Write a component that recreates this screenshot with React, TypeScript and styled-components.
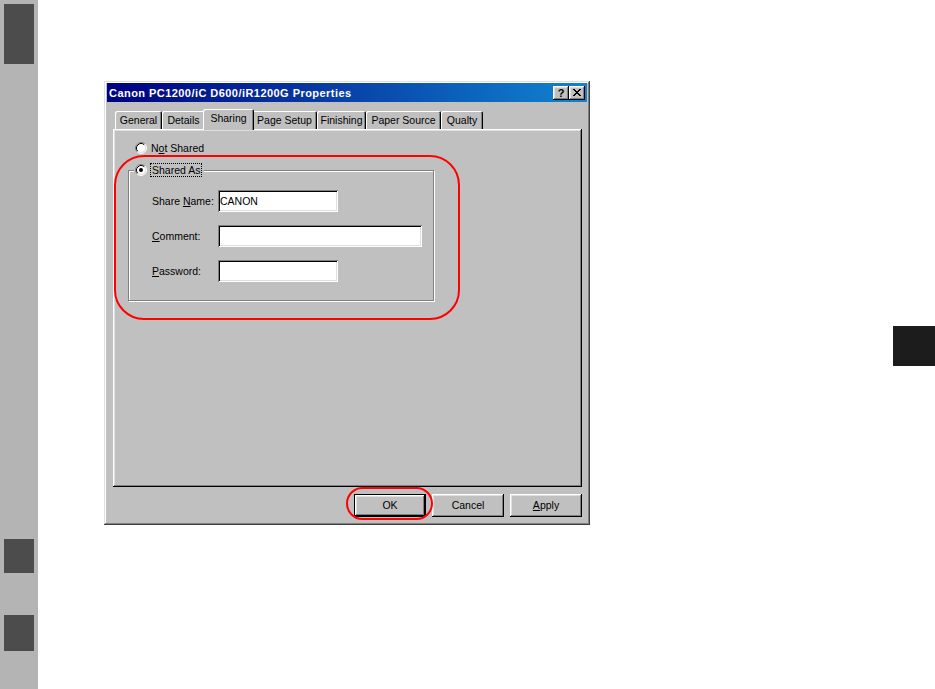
import * as React from 'react';
import styled, {createGlobalStyle} from 'styled-components';

const GlobalStyle = createGlobalStyle`
  html, body {
    margin: 0;
    padding: 0;
    background: #fff;
  }
  body {
    font-family: "Liberation Sans", Arial, sans-serif;
    font-size: 10.5px;
    color: #000;
  }
`;

interface ITab {
  label: string;
  width: number;
  selected?: boolean;
}

const tabs: ITab[] = [
  {label: 'General', width: 47},
  {label: 'Details', width: 43},
  {label: 'Sharing', width: 47, selected: true},
  {label: 'Page Setup', width: 65},
  {label: 'Finishing', width: 49},
  {label: 'Paper Source', width: 75},
  {label: 'Qualty', width: 42},
];

const Radio: React.VFC<{checked?: boolean}> = ({checked}) => (
  <RadioIcon width="12" height="12" viewBox="0 0 12 12">
    <circle cx="6" cy="6" r="5" fill="#fff" />
    <path d="M2.11 9.89 A5.5 5.5 0 0 1 9.89 2.11" fill="none" stroke="#808080" />
    <path d="M9.89 2.11 A5.5 5.5 0 0 1 2.11 9.89" fill="none" stroke="#fff" />
    <path d="M2.82 9.18 A4.5 4.5 0 0 1 9.18 2.82" fill="none" stroke="#000" />
    <path d="M9.18 2.82 A4.5 4.5 0 0 1 2.82 9.18" fill="none" stroke="#dfdfdf" />
    {checked && <circle cx="6" cy="6" r="2" fill="#000" />}
  </RadioIcon>
);

const CloseGlyph = () => (
  <svg width="8" height="7" viewBox="0 0 8 7">
    <path d="M0 0h2v1h1v1h2V1h1V0h2v1H7v1H6v1H5v1h1v1h1v1h1v1H6V6H5V5H3v1H2v1H0V6h1V5h1V4h1V3H2V2H1V1H0z" fill="#000" />
  </svg>
);

export default function App() {
  return (
    <>
      <GlobalStyle />
      <Page>
        <SideStrip>
          <SideBlock $top={0} $height={60} />
          <SideBlock $top={475} $height={34} />
          <SideBlock $top={42} $height={36} />
        </SideStrip>

        <Content>
          <Dialog>
            <TitleBar>
              <TitleText>Canon PC1200/iC D600/iR1200G Properties</TitleText>
              <TitleButtons>
                <TitleButton>?</TitleButton>
                <TitleButton>
                  <CloseGlyph />
                </TitleButton>
              </TitleButtons>
            </TitleBar>

            <Body>
              <TabRow>
                {tabs.map((t) => (
                  <Tab key={t.label} $width={t.width} $selected={!!t.selected}>
                    {t.label}
                  </Tab>
                ))}
              </TabRow>

              <Panel>
                <RadioRow>
                  <Radio />
                  <span>
                    N<u>o</u>t Shared
                  </span>
                </RadioRow>

                <Group>
                  <Legend>
                    <Radio checked />
                    <Focus>Shared As</Focus>
                  </Legend>
                  <Fields>
                    <FieldLabel>
                      Share <u>N</u>ame:
                    </FieldLabel>
                    <TextBox $width={120} defaultValue="CANON" />
                    <FieldLabel>
                      <u>C</u>omment:
                    </FieldLabel>
                    <TextBox $width={204} defaultValue="" />
                    <FieldLabel>
                      <u>P</u>assword:
                    </FieldLabel>
                    <TextBox $width={120} defaultValue="" />
                  </Fields>
                </Group>
              </Panel>

              <ButtonRow>
                <Button $default>OK</Button>
                <Button>Cancel</Button>
                <Button>
                  <u>A</u>pply
                </Button>
              </ButtonRow>
            </Body>

            <Callout $left={10} $top={74} $width={346} $height={165} $radius={30} />
            <Callout $left={242} $top={406} $width={87} $height={33} $radius={17} />
          </Dialog>
        </Content>

        <RightColumn>
          <RightTab />
        </RightColumn>
      </Page>
    </>
  );
}

const Page = styled.div`
  display: flex;
  width: 935px;
  height: 689px;
  overflow: hidden;
  background: #fff;
`;

const SideStrip = styled.div`
  width: 38px;
  flex: none;
  box-sizing: border-box;
  padding: 4px;
  display: flex;
  flex-direction: column;
  background: #b4b4b4;
`;

const SideBlock = styled.div<{$top: number; $height: number}>`
  margin-top: ${(p) => p.$top}px;
  height: ${(p) => p.$height}px;
  background: #4c4c4c;
`;

const Content = styled.div`
  flex: 1;
  padding: 81px 0 0 66px;
`;

const RightColumn = styled.div`
  width: 42px;
  flex: none;
  padding-top: 326px;
`;

const RightTab = styled.div`
  height: 40px;
  background: #1c1c1c;
`;

const Dialog = styled.div`
  position: relative;
  width: 486px;
  height: 444px;
  box-sizing: border-box;
  padding: 2px 3px;
  background: #c0c0c0;
  box-shadow: inset -1px -1px #404040, inset 1px 1px #dfdfdf,
    inset -2px -2px #808080, inset 2px 2px #fff;
`;

const TitleBar = styled.div`
  height: 19px;
  display: flex;
  align-items: center;
  justify-content: space-between;
  padding: 0 2px 0 2px;
  background: linear-gradient(to right, #000080, #1084d0);
  color: #fff;
`;

const TitleText = styled.span`
  font-weight: bold;
  font-size: 11px;
  letter-spacing: 0.45px;
  white-space: nowrap;
`;

const TitleButtons = styled.div`
  display: flex;
`;

const TitleButton = styled.div`
  width: 16px;
  height: 14px;
  box-sizing: border-box;
  display: flex;
  align-items: center;
  justify-content: center;
  background: #c0c0c0;
  color: #000;
  font-weight: bold;
  font-size: 11px;
  box-shadow: inset -1px -1px #000, inset 1px 1px #fff,
    inset -2px -2px #808080, inset 2px 2px #dfdfdf;
`;

const Body = styled.div`
  padding: 7px 0 0 6px;
`;

const TabRow = styled.div`
  display: flex;
  align-items: flex-end;
  height: 20px;
  padding-left: 2px;
  position: relative;
  z-index: 1;
`;

const Tab = styled.div<{$width: number; $selected: boolean}>`
  width: ${(p) => p.$width + (p.$selected ? 4 : 0)}px;
  height: ${(p) => (p.$selected ? 21 : 18)}px;
  margin: 0 ${(p) => (p.$selected ? -2 : 0)}px;
  margin-bottom: ${(p) => (p.$selected ? -1 : 0)}px;
  position: relative;
  z-index: ${(p) => (p.$selected ? 2 : 1)};
  box-sizing: border-box;
  display: flex;
  align-items: ${(p) => (p.$selected ? 'flex-start' : 'center')};
  padding-top: ${(p) => (p.$selected ? 3 : 0)}px;
  justify-content: center;
  background: #c0c0c0;
  border-top-left-radius: 2px;
  border-top-right-radius: 2px;
  white-space: nowrap;
  box-shadow: inset 1px 1px #fff, inset -1px 0 #000, inset -2px 0 #808080;
`;

const Panel = styled.div`
  width: 469px;
  height: 358px;
  box-sizing: border-box;
  padding: 13px 0 0 22px;
  background: #c0c0c0;
  box-shadow: inset -1px -1px #000, inset 1px 1px #fff,
    inset -2px -2px #808080, inset 2px 2px #dfdfdf;
`;

const RadioIcon = styled.svg`
  flex: none;
  display: block;
`;

const RadioRow = styled.label`
  display: flex;
  align-items: center;
  gap: 4px;
  height: 12px;
`;

const Group = styled.fieldset`
  margin: 9px 0 0 -7px;
  width: 306px;
  box-sizing: border-box;
  padding: 0;
  border: 1px solid #808080;
  box-shadow: inset 1px 1px #fff, 1px 1px #fff;
  min-width: 0;
`;

const Legend = styled.legend`
  display: flex;
  align-items: center;
  gap: 3px;
  margin-left: 5px;
  padding: 0 2px 0 1px;
  background: #c0c0c0;
`;

const Focus = styled.span`
  border: 1px dotted #000;
  padding: 0 1px;
  line-height: 12px;
`;

const Fields = styled.div`
  display: grid;
  grid-template-columns: 66px auto;
  row-gap: 13px;
  align-items: center;
  justify-items: start;
  padding: 13px 0 18px 23px;
`;

const FieldLabel = styled.span`
  white-space: nowrap;
`;

const TextBox = styled.input<{$width: number}>`
  width: ${(p) => p.$width}px;
  height: 22px;
  box-sizing: border-box;
  padding: 0 2px;
  border: none;
  outline: none;
  margin: 0;
  background: #fff;
  font-family: "Liberation Sans", Arial, sans-serif;
  font-size: 10.5px;
  color: #000;
  box-shadow: inset 1px 1px #808080, inset -1px -1px #fff,
    inset 2px 2px #000, inset -2px -2px #dfdfdf;
`;

const ButtonRow = styled.div`
  width: 469px;
  display: flex;
  justify-content: flex-end;
  gap: 6px;
  margin-top: 7px;
`;

const Button = styled.div<{$default?: boolean}>`
  width: 72px;
  height: 23px;
  box-sizing: border-box;
  display: flex;
  align-items: center;
  justify-content: center;
  padding-bottom: 2px;
  background: #c0c0c0;
  border: ${(p) => (p.$default ? '1px solid #000' : 'none')};
  box-shadow: inset -1px -1px #000, inset 1px 1px #fff,
    inset -2px -2px #808080, inset 2px 2px #dfdfdf;
`;

const Callout = styled.div<{
  $left: number;
  $top: number;
  $width: number;
  $height: number;
  $radius: number;
}>`
  position: absolute;
  left: ${(p) => p.$left}px;
  top: ${(p) => p.$top}px;
  width: ${(p) => p.$width}px;
  height: ${(p) => p.$height}px;
  box-sizing: border-box;
  border: 2px solid #ff0000;
  border-radius: ${(p) => p.$radius}px;
  pointer-events: none;
`;
